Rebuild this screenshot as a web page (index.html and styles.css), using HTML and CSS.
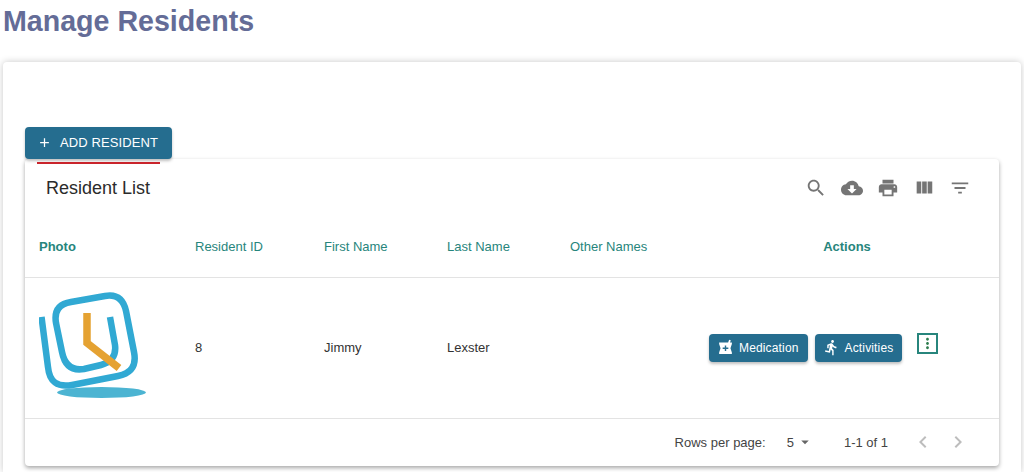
FILE: index.html
```html
<!DOCTYPE html>
<html lang="en">
<head>
<meta charset="utf-8">
<title>Manage Residents</title>
<link rel="stylesheet" href="styles.css">
</head>
<body>
<h1 class="title">Manage Residents</h1>
<main class="outer">
  <button class="btn add"><svg class="plus" viewBox="0 0 24 24"><path d="M19 13h-6v6h-2v-6H5v-2h6V5h2v6h6v2z"/></svg>ADD RESIDENT</button>
  <div class="underline"></div>
  <section class="card">
    <div class="toolbar">
      <h2 class="list-title">Resident List</h2>
      <div class="tools">
        <svg viewBox="0 0 24 24"><path d="M15.5 14h-.79l-.28-.27C15.41 12.59 16 11.11 16 9.5 16 5.91 13.09 3 9.5 3S3 5.91 3 9.5 5.91 16 9.5 16c1.61 0 3.09-.59 4.23-1.57l.27.28v.79l5 4.99L20.49 19l-4.99-5zm-6 0C7.01 14 5 11.99 5 9.5S7.01 5 9.5 5 14 7.01 14 9.5 11.99 14 9.5 14z"/></svg>
        <svg viewBox="0 0 24 24"><path d="M19.35 10.04C18.67 6.59 15.64 4 12 4 9.11 4 6.6 5.64 5.35 8.04 2.34 8.36 0 10.91 0 14c0 3.31 2.69 6 6 6h13c2.76 0 5-2.24 5-5 0-2.64-2.05-4.78-4.65-4.96zM17 13l-5 5-5-5h3V9h4v4h3z"/></svg>
        <svg viewBox="0 0 24 24"><path d="M19 8H5c-1.66 0-3 1.34-3 3v6h4v4h12v-4h4v-6c0-1.66-1.34-3-3-3zm-3 11H8v-5h8v5zm3-7c-.55 0-1-.45-1-1s.45-1 1-1 1 .45 1 1-.45 1-1 1zm-1-9H6v4h12V3z"/></svg>
        <svg viewBox="0 0 24 24"><path d="M10 18h5V5h-5v13zm-6 0h5V5H4v13zM16 5v13h5V5h-5z"/></svg>
        <svg viewBox="0 0 24 24"><path d="M10 18h4v-2h-4v2zM3 6v2h18V6H3zm3 7h12v-2H6v2z"/></svg>
      </div>
    </div>
    <table class="table">
      <thead>
        <tr>
          <th class="col-photo strong">Photo</th>
          <th class="col-id">Resident ID</th>
          <th class="col-first">First Name</th>
          <th class="col-last">Last Name</th>
          <th class="col-other">Other Names</th>
          <th class="col-actions strong">Actions</th>
        </tr>
      </thead>
      <tbody>
        <tr>
          <td class="photo">
            <svg class="logo" viewBox="39 290 108 108">
              <ellipse cx="101.500" cy="392.500" rx="44.500" ry="5.500" fill="#4cb4d2"/>
              <path d="M41.500 317 L48 367 Q50 389 72 385 L118 376 Q138 372 134 352 L126 311 Q122 293 105 296 L71 302 Q53 305 56 323 L62 352 Q66 372 84 369 L101 365 Q117 361 115 345 L110 317" fill="none" stroke="#31a9d3" stroke-width="6.500"/>
              <path d="M87 313 V343 L119 368" fill="none" stroke="#e5a232" stroke-width="7.500"/>
            </svg>
          </td>
          <td>8</td>
          <td>Jimmy</td>
          <td>Lexster</td>
          <td></td>
          <td class="actions">
            <div class="action-row">
              <button class="btn small"><svg viewBox="0 0 24 24"><path d="M21 5h-2.64l1.14-3.14L17.15 1l-1.46 4H3v2l2 6-2 6v2h18v-2l-2-6 2-6V5zm-5 9h-3v3h-2v-3H8v-2h3V9h2v3h3v2z"/></svg>Medication</button>
              <button class="btn small"><svg viewBox="0 0 24 24"><path d="M13.49 5.48c1.1 0 2-.9 2-2s-.9-2-2-2-2 .9-2 2 .9 2 2 2zm-3.6 13.9l1-4.4 2.1 2v6h2v-7.5l-2.1-2 .6-3c1.3 1.5 3.3 2.5 5.5 2.5v-2c-1.9 0-3.5-1-4.3-2.4l-1-1.6c-.4-.6-1-1-1.7-1-.3 0-.5.1-.8.1l-5.2 2.2v4.7h2v-3.4l1.8-.7-1.6 8.1-4.9-1-.4 2 7 1.4z"/></svg>Activities</button>
              <button class="more"><svg viewBox="0 0 24 24"><path d="M12 8c1.1 0 2-.9 2-2s-.9-2-2-2-2 .9-2 2 .9 2 2 2zm0 2c-1.1 0-2 .9-2 2s.9 2 2 2 2-.9 2-2-.9-2-2-2zm0 6c-1.1 0-2 .9-2 2s.9 2 2 2 2-.9 2-2-.9-2-2-2z"/></svg></button>
            </div>
          </td>
        </tr>
      </tbody>
    </table>
    <footer class="pager">
      <span>Rows per page:</span>
      <span class="size">5<svg viewBox="0 0 24 24"><path d="M7 10l5 5 5-5z"/></svg></span>
      <span class="range">1-1 of 1</span>
      <svg class="nav" viewBox="0 0 24 24"><path d="M15.41 7.41L14 6l-6 6 6 6 1.41-1.41L10.83 12z"/></svg>
      <svg class="nav" viewBox="0 0 24 24"><path d="M10 6L8.59 7.41 13.17 12l-4.58 4.59L10 18l6-6z"/></svg>
    </footer>
  </section>
</main>
</body>
</html>
```
FILE: styles.css
```css
* { box-sizing: border-box; }
body {
  margin: 0;
  height: 472px;
  overflow: hidden;
  background: #fff;
  font-family: "Liberation Sans", Arial, sans-serif;
  color: #2b2b2b;
}
.title {
  margin: 0;
  padding: 5px 0 0 3px;
  height: 62px;
  font: bold 28.600px/33px "Liberation Sans", Arial, sans-serif;
  color: #646c97;
}
.outer {
  margin: 0 3px;
  height: 410px;
  padding: 65px 22px 0;
  background: #fff;
  border-radius: 4px 4px 0 0;
  box-shadow: 0 0 7px rgba(0, 0, 0, .22);
}
.btn {
  display: inline-flex;
  align-items: center;
  border: 0;
  border-radius: 4px;
  background: #256d8f;
  color: #fff;
  font-family: "Liberation Sans", Arial, sans-serif;
  box-shadow: 0 2px 3px rgba(0, 0, 0, .25);
}
.add {
  position: relative;
  z-index: 1;
  display: flex;
  width: 147px;
  height: 32px;
  padding: 0 0 2px 12px;
  font-size: 13px;
  letter-spacing: .1px;
}
.plus { width: 15px; height: 15px; margin-right: 8px; fill: #fff; }
.underline {
  position: absolute;
  z-index: 2;
  left: 37px;
  top: 162px;
  width: 123px;
  height: 2px;
  background: #c9242b;
}
.card {
  height: 307px;
  background: #fff;
  border-radius: 4px;
  box-shadow: 0 2px 4px rgba(0, 0, 0, .35);
}
.toolbar {
  display: flex;
  align-items: center;
  justify-content: space-between;
  height: 57px;
  padding: 0 28px 0 21px;
}
.list-title {
  margin: 0;
  padding-top: 2px;
  font-size: 18px;
  font-weight: 400;
  color: #2b2b2b;
}
.tools { display: flex; gap: 14px; }
.tools svg { width: 22px; height: 22px; fill: #757575; }
.table {
  width: 100%;
  border-collapse: collapse;
  table-layout: fixed;
  font-size: 13px;
}
th {
  height: 61px;
  padding: 0;
  text-align: left;
  font-weight: 400;
  color: #27857c;
  border-bottom: 1px solid #e3e3e3;
}
th.strong { font-weight: 700; }
td {
  height: 141px;
  padding: 0;
  border-bottom: 1px solid #e3e3e3;
  color: #333;
}
.col-photo { width: 170px; padding-left: 14px; }
.col-id { width: 129px; }
.col-first { width: 123px; }
.col-last { width: 123px; }
.col-other { width: 134px; }
.col-actions { text-align: center; padding-right: 9px; }
td.photo { padding: 12px 0 0 14px; vertical-align: top; }
.logo { display: block; width: 108px; height: 108px; }
.action-row {
  display: flex;
  align-items: center;
  gap: 7px;
  padding-left: 5px;
}
.small {
  height: 28px;
  padding: 0 9px 0 8px;
  font-size: 12px;
  letter-spacing: .15px;
  white-space: nowrap;
}
.small svg { width: 17px; height: 17px; margin-right: 5px; fill: #fff; }
.more {
  display: block;
  width: 21px;
  height: 21px;
  margin: -8px 0 0 8px;
  padding: 0;
  border: 2px solid #27857c;
  background: #fff;
}
.more svg { display: block; width: 17px; height: 17px; fill: #2e7d4f; }
.pager {
  display: flex;
  align-items: center;
  justify-content: flex-end;
  height: 47px;
  padding-right: 29px;
  font-size: 13px;
  color: #444;
}
.size { display: flex; align-items: center; margin-left: 21px; }
.size svg { width: 18px; height: 18px; margin-left: 2px; fill: #666; }
.range { margin-left: 30px; margin-right: 23px; }
.nav { width: 24px; height: 24px; fill: #bdbdbd; }
.nav + .nav { margin-left: 11px; }
```
